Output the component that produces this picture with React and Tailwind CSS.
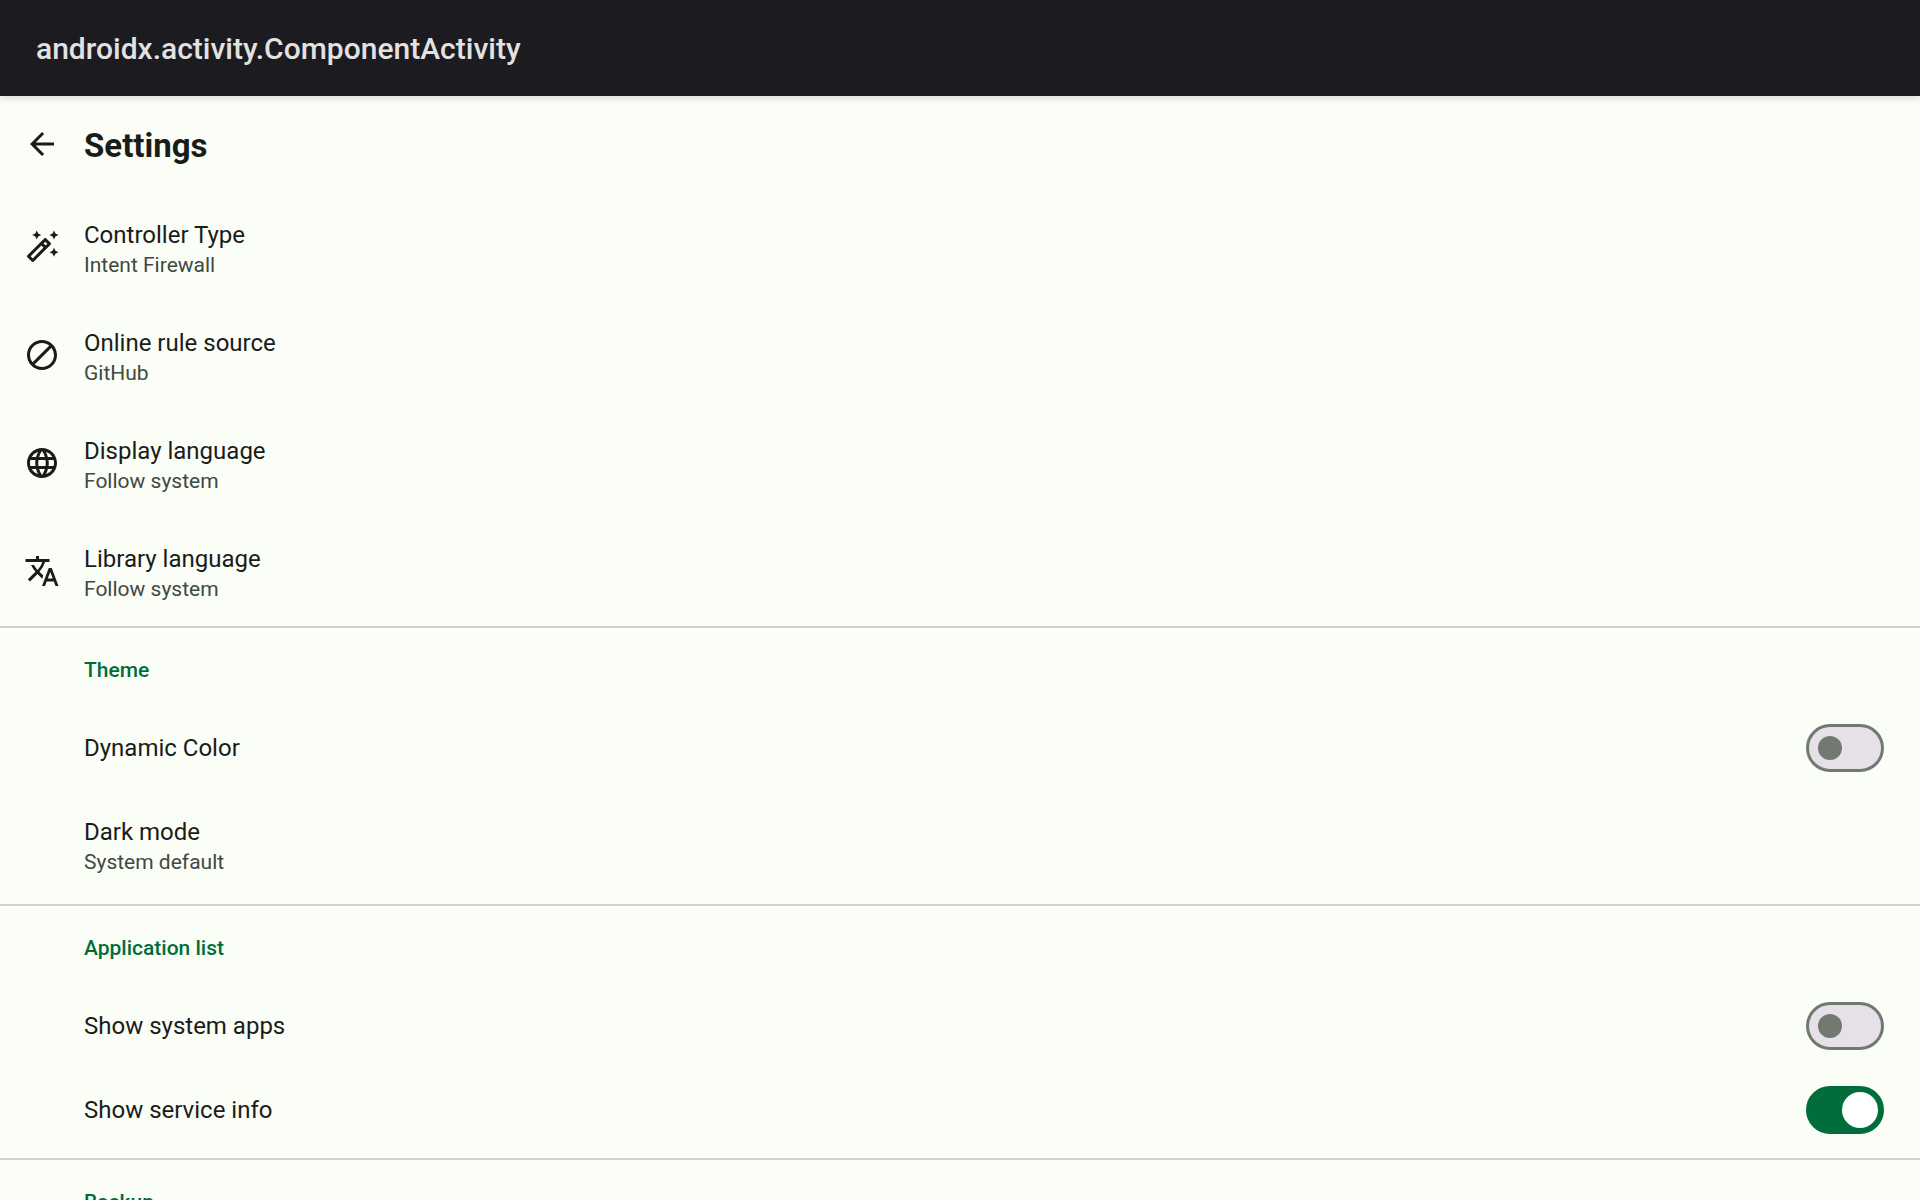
import { useState } from "react";
import {
  MdArrowBack,
  MdBlock,
  MdLanguage,
  MdOutlineAutoFixHigh,
  MdTranslate,
} from "react-icons/md";

function Labels({ title, summary }) {
  return (
    <span className="flex flex-col items-start">
      <span className="text-2xl leading-9 text-[#191c19]">{title}</span>
      {summary && (
        <span className="text-[21px] leading-6 text-[#414941]">{summary}</span>
      )}
    </span>
  );
}

function Preference({ icon: Icon, title, summary }) {
  return (
    <li>
      <button
        type="button"
        className="flex min-h-[108px] w-full items-center gap-6 px-6 text-left"
      >
        <span className="flex w-9 shrink-0 justify-center text-[#191c19]">
          {Icon && <Icon size={36} aria-hidden="true" />}
        </span>
        <Labels title={title} summary={summary} />
      </button>
    </li>
  );
}

function SwitchPreference({ title, initial = false }) {
  const [on, setOn] = useState(initial);
  return (
    <li>
      <label className="flex min-h-[84px] items-center justify-between pr-9 pl-21">
        <Labels title={title} />
        <input
          type="checkbox"
          role="switch"
          checked={on}
          onChange={(e) => setOn(e.target.checked)}
          className="flex h-12 w-[78px] shrink-0 appearance-none items-center rounded-full border-3 border-[#717971] bg-[#e6e0e9] px-[9px] before:size-6 before:rounded-full before:bg-[#717971] checked:justify-end checked:border-[#006d3b] checked:bg-[#006d3b] checked:px-[3px] checked:before:size-9 checked:before:bg-white"
        />
      </label>
    </li>
  );
}

function Section({ title, children }) {
  return (
    <section className="border-b-2 border-[#cfd1cc] pb-1.5">
      <h2 className="flex h-[78px] items-center pt-1.5 pl-21 text-[21px] leading-[30px] font-medium text-[#006d3b]">
        {title}
      </h2>
      <ul>{children}</ul>
    </section>
  );
}

export default function App() {
  return (
    <div className="h-screen overflow-hidden bg-[#fbfdf7] font-['Roboto',sans-serif]">
      <header className="relative flex h-24 items-center bg-[#1b1b20] px-9 pt-0.5 shadow-[0_2px_8px_rgba(0,0,0,0.15)]">
        <span className="text-3xl font-medium text-[#e2e2e2]">
          androidx.activity.ComponentActivity
        </span>
      </header>
      <div className="flex h-24 items-center gap-6 px-6">
        <button type="button" aria-label="Back" className="text-[#191c19]">
          <MdArrowBack size={36} aria-hidden="true" />
        </button>
        <h1 className="pt-1 text-[33px] leading-[42px] font-bold text-[#191c19]">
          Settings
        </h1>
      </div>
      <main>
        <ul className="border-b-2 border-[#cfd1cc] py-px">
          <Preference
            icon={MdOutlineAutoFixHigh}
            title="Controller Type"
            summary="Intent Firewall"
          />
          <Preference icon={MdBlock} title="Online rule source" summary="GitHub" />
          <Preference
            icon={MdLanguage}
            title="Display language"
            summary="Follow system"
          />
          <Preference
            icon={MdTranslate}
            title="Library language"
            summary="Follow system"
          />
        </ul>
        <Section title="Theme">
          <SwitchPreference title="Dynamic Color" />
          <Preference title="Dark mode" summary="System default" />
        </Section>
        <Section title="Application list">
          <SwitchPreference title="Show system apps" />
          <SwitchPreference title="Show service info" initial />
        </Section>
        <Section title="Backup" />
      </main>
    </div>
  );
}
